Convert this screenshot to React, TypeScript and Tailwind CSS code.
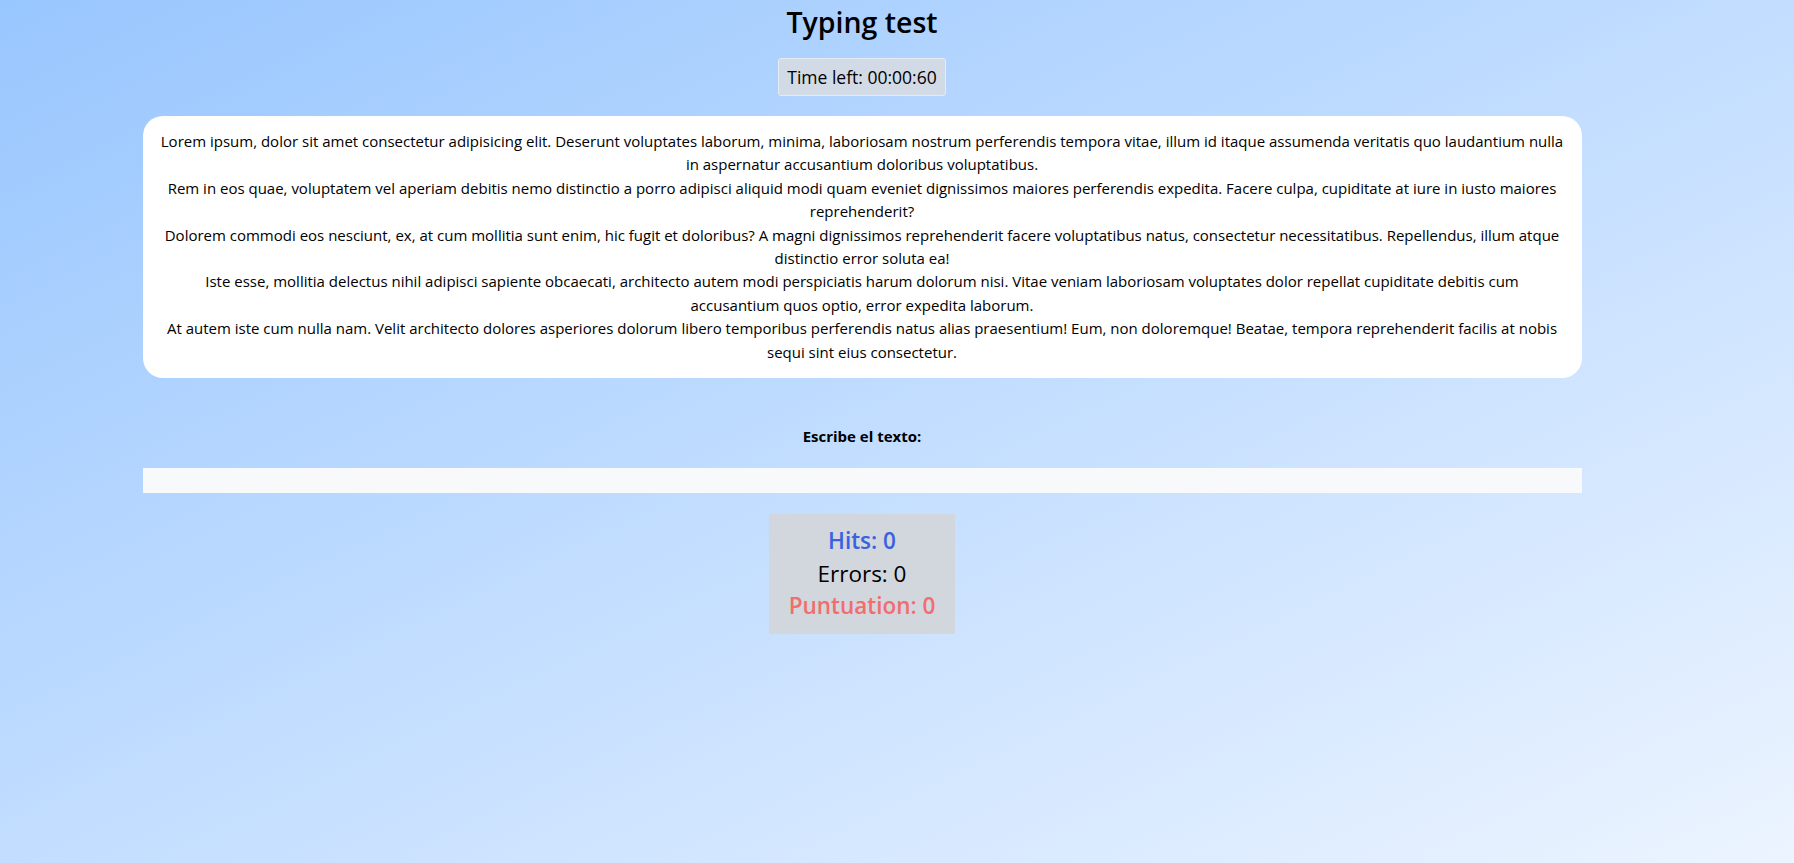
import React from "react";

const paragraphs = [
  "Lorem ipsum, dolor sit amet consectetur adipisicing elit. Deserunt voluptates laborum, minima, laboriosam nostrum perferendis tempora vitae, illum id itaque assumenda veritatis quo laudantium nulla in aspernatur accusantium doloribus voluptatibus.",
  "Rem in eos quae, voluptatem vel aperiam debitis nemo distinctio a porro adipisci aliquid modi quam eveniet dignissimos maiores perferendis expedita. Facere culpa, cupiditate at iure in iusto maiores reprehenderit?",
  "Dolorem commodi eos nesciunt, ex, at cum mollitia sunt enim, hic fugit et doloribus? A magni dignissimos reprehenderit facere voluptatibus natus, consectetur necessitatibus. Repellendus, illum atque distinctio error soluta ea!",
  "Iste esse, mollitia delectus nihil adipisci sapiente obcaecati, architecto autem modi perspiciatis harum dolorum nisi. Vitae veniam laboriosam voluptates dolor repellat cupiditate debitis cum accusantium quos optio, error expedita laborum.",
  "At autem iste cum nulla nam. Velit architecto dolores asperiores dolorum libero temporibus perferendis natus alias praesentium! Eum, non doloremque! Beatae, tempora reprehenderit facilis at nobis sequi sint eius consectetur.",
];

export default function App() {
  return (
    <div className="min-h-screen w-full bg-linear-to-br from-[#98c6fe] to-[#ecf4ff] font-['Open_Sans',sans-serif] text-black">
      <div className="w-[1724px] flex flex-col items-center">
        {/* Header */}
        <h1 className="mt-[3px] text-[28.5px] leading-[38px] font-semibold">Typing test</h1>
        <div className="mt-[17px] h-[38px] px-[8px] flex items-center bg-[#d2dae5] border border-[#e4ebf4] rounded-[3px] text-[17.5px]">
          Time left: 00:00:60
        </div>

        {/* Text to type */}
        <div className="mt-[20px] w-[1439px] bg-white rounded-[20px] px-[18px] py-[14px] text-center text-[15px] leading-[23.4px]">
          {paragraphs.map((p, i) => (
            <p key={i}>{p}</p>
          ))}
        </div>

        <label className="mt-[48px] text-[15px] leading-[20px] font-bold">Escribe el texto:</label>
        <input
          type="text"
          className="mt-[22px] w-[1439px] h-[25px] bg-[#f8f9fb] outline-none px-2 text-[14px]"
        />

        {/* Stats */}
        <div className="mt-[21px] w-[186px] h-[120px] bg-[#d2d6dd] flex flex-col items-center justify-center text-[22.5px] leading-[32.5px]">
          <span className="font-semibold text-[#3a61e0]">Hits: 0</span>
          <span>Errors: 0</span>
          <span className="font-semibold text-[#f26d6d]">Puntuation: 0</span>
        </div>
      </div>
    </div>
  );
}
